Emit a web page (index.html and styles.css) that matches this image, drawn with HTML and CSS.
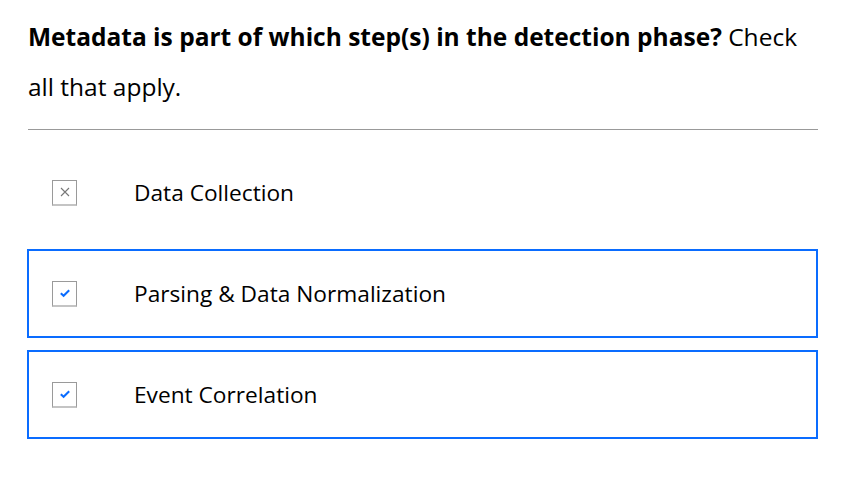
FILE: index.html
```html
<!DOCTYPE html>
<html>
<head>
<meta charset="utf-8">
<link rel="stylesheet" href="styles.css">
</head>
<body>
<div class="question">
  <p class="prompt"><strong>Metadata is part of which step(s) in the detection phase?</strong> Check all that apply.</p>
  <hr class="rule">
  <ul class="options">
    <li class="option">
      <span class="box">
        <svg width="12" height="12" viewBox="0 0 12 12"><path d="M2 2 L10 10 M10 2 L2 10" stroke="#777" stroke-width="1.1" fill="none"/></svg>
      </span>
      <span class="label">Data Collection</span>
    </li>
    <li class="option selected">
      <span class="box">
        <svg width="12" height="12" viewBox="0 0 12 12"><path d="M1.8 6.2 L4.6 8.8 L10.2 3.2" stroke="#0a6cff" stroke-width="2" fill="none"/></svg>
      </span>
      <span class="label">Parsing &amp; Data Normalization</span>
    </li>
    <li class="option selected">
      <span class="box">
        <svg width="12" height="12" viewBox="0 0 12 12"><path d="M1.8 6.2 L4.6 8.8 L10.2 3.2" stroke="#0a6cff" stroke-width="2" fill="none"/></svg>
      </span>
      <span class="label">Event Correlation</span>
    </li>
  </ul>
</div>
</body>
</html>
```
FILE: styles.css
```css
* { box-sizing: border-box; }
html, body { margin: 0; padding: 0; background: #fff; }
body {
  font-family: "Open Sans", "Noto Sans", sans-serif;
  color: #000;
}
.question {
  padding: 12px 44px 0 27px;
}
.prompt {
  margin: 0;
  padding-left: 1px;
  font-size: 24.5px;
  line-height: 50px;
}
.prompt strong { font-weight: 700; }
.rule {
  border: none;
  border-top: 1px solid #999;
  margin: 17px 0 0 1px;
  height: 0;
}
.options {
  list-style: none;
  margin: 18px 0 0 0;
  padding: 0;
  display: flex;
  flex-direction: column;
  gap: 12px;
}
.option {
  height: 89px;
  border: 2px solid transparent;
  display: flex;
  align-items: center;
  padding-left: 23px;
}
.option.selected {
  border-color: #0a6cff;
}
.box {
  width: 25px;
  height: 26px;
  border: 1px solid #9a9a9a;
  border-bottom: 2px solid #c4c4c4;
  display: flex;
  align-items: center;
  justify-content: center;
  flex: none;
  background: #fff;
}
.label {
  margin-left: 57px;
  font-size: 22.7px;
}
```
